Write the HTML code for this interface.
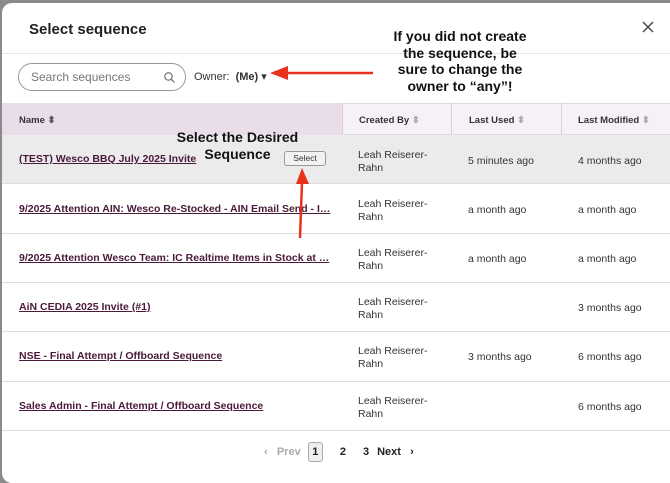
<!DOCTYPE html><html><head><style>
*{box-sizing:border-box;margin:0;padding:0}
body{width:670px;height:476px;background:#8a8a8a;font-family:"Liberation Sans",sans-serif;position:relative;overflow:hidden}
.m{position:absolute;left:2px;top:3px;width:680px;height:480px;background:#fff;border-radius:10px;overflow:hidden}
.t{position:absolute;left:27px;top:18px;font-size:15px;font-weight:bold;color:#222}
.x{position:absolute;left:640px;top:18px}
.hl{position:absolute;left:0;top:50px;width:680px;height:1px;background:#e6e6e6}
.search{position:absolute;left:16px;top:60px;width:168px;height:28px;border:1px solid #999;border-radius:14px;font-size:12px;color:#777;padding:6px 12px}
.own{position:absolute;left:192px;top:67px;font-size:11px;color:#333}
.row{position:absolute;left:0;width:680px;border-bottom:1px solid #ddd}
.c{position:absolute;font-size:10.5px;color:#333;line-height:13px}
.lk{position:absolute;left:17px;font-size:10.5px;font-weight:bold;color:#4a1a3a;text-decoration:underline;white-space:nowrap}
.hd{font-size:9.5px;font-weight:bold;color:#333}
.note{position:absolute;font-weight:bold;font-size:14px;color:#111;text-align:center;line-height:16.5px}
</style></head><body>
<div class="m">
<div class="t">Select sequence</div>
<svg class="x" width="12" height="12"><path d="M1 1L11 11M11 1L1 11" stroke="#444" stroke-width="1.4"/></svg>
<div class="hl"></div>
<div class="search">Search sequences<svg style="position:absolute;right:10px;top:8px" width="11" height="11"><circle cx="4.5" cy="4.5" r="3.7" stroke="#666" fill="none" stroke-width="1.1"/><path d="M7.3 7.3L10.5 10.5" stroke="#666" stroke-width="1.1"/></svg></div>
<div class="own">Owner:&nbsp; <b>(Me)</b> ▾</div>
<div class="row" style="top:100px;height:32px;background:#f6f1f7;border-top:1px solid #e0d6e2"></div>
<div style="position:absolute;left:0;top:100px;width:340px;height:32px;background:#e9dde9"></div>
<div style="position:absolute;left:340px;top:100px;width:1px;height:32px;background:#d8d0da"></div>
<div style="position:absolute;left:449px;top:100px;width:1px;height:32px;background:#d8d0da"></div>
<div style="position:absolute;left:559px;top:100px;width:1px;height:32px;background:#d8d0da"></div>
<div class="c hd" style="left:17px;top:111px">Name <span style="color:#555">⬍</span></div>
<div class="c hd" style="left:357px;top:111px">Created By <span style="color:#aaa">⬍</span></div>
<div class="c hd" style="left:467px;top:111px">Last Used <span style="color:#aaa">⬍</span></div>
<div class="c hd" style="left:576px;top:111px">Last Modified <span style="color:#aaa">⬍</span></div>

<div class="row" style="top:132px;height:49px;background:#ebebeb"></div>
<div class="lk" style="top:150px">(TEST) Wesco BBQ July 2025 Invite</div>
<div style="position:absolute;left:282px;top:148px;width:42px;height:15px;border:1px solid #999;border-radius:3px;background:#f2f2f2;font-size:8.5px;text-align:center;line-height:13px;color:#333">Select</div>
<div class="c" style="left:356px;top:146px">Leah Reiserer-<br>Rahn</div><div class="c" style="left:466px;top:152px">5 minutes ago</div><div class="c" style="left:576px;top:152px">4 months ago</div>

<div class="row" style="top:181px;height:50px"></div>
<div class="lk" style="top:200px">9/2025 Attention AIN: Wesco Re-Stocked - AIN Email Send - I…</div>
<div class="c" style="left:356px;top:195px">Leah Reiserer-<br>Rahn</div><div class="c" style="left:466px;top:201px">a month ago</div><div class="c" style="left:576px;top:201px">a month ago</div>

<div class="row" style="top:231px;height:49px"></div>
<div class="lk" style="top:249px">9/2025 Attention Wesco Team: IC Realtime Items in Stock at …</div>
<div class="c" style="left:356px;top:244px">Leah Reiserer-<br>Rahn</div><div class="c" style="left:466px;top:250px">a month ago</div><div class="c" style="left:576px;top:250px">a month ago</div>

<div class="row" style="top:280px;height:49px"></div>
<div class="lk" style="top:298px">AiN CEDIA 2025 Invite (#1)</div>
<div class="c" style="left:356px;top:293px">Leah Reiserer-<br>Rahn</div><div class="c" style="left:576px;top:299px">3 months ago</div>

<div class="row" style="top:329px;height:50px"></div>
<div class="lk" style="top:347px">NSE - Final Attempt / Offboard Sequence</div>
<div class="c" style="left:356px;top:342px">Leah Reiserer-<br>Rahn</div><div class="c" style="left:466px;top:348px">3 months ago</div><div class="c" style="left:576px;top:348px">6 months ago</div>

<div class="row" style="top:379px;height:49px"></div>
<div class="lk" style="top:397px">Sales Admin - Final Attempt / Offboard Sequence</div>
<div class="c" style="left:356px;top:392px">Leah Reiserer-<br>Rahn</div><div class="c" style="left:576px;top:398px">6 months ago</div>

<div style="position:absolute;top:439px;left:262px;font-size:11px;font-weight:bold;color:#222;white-space:nowrap">
<span style="color:#aaa">‹&nbsp;&nbsp; Prev</span>
<span style="display:inline-block;width:15px;height:20px;border:1px solid #aaa;border-radius:3px;background:#eee;text-align:center;line-height:18px;margin-left:4px">1</span>
<span style="margin-left:14px">2</span><span style="margin-left:17px">3</span><span style="margin-left:8px">Next&nbsp;&nbsp; ›</span></div>
</div>
<div class="note" style="left:390px;top:28px;width:140px">If you did not create the sequence, be sure to change the owner to “any”!</div>
<div class="note" style="left:170px;top:129px;width:135px">Select the Desired Sequence</div>
<svg style="position:absolute;left:0;top:0" width="670" height="476">
<path d="M373 73L284 73" stroke="#e8321e" stroke-width="2.5"/><path d="M270 73L288 66L288 80Z" fill="#e8321e"/>
<path d="M300 238L302 182" stroke="#e8321e" stroke-width="2.5"/><path d="M302 168L296 184L309 184Z" fill="#e8321e"/>
</svg>
</body></html>
